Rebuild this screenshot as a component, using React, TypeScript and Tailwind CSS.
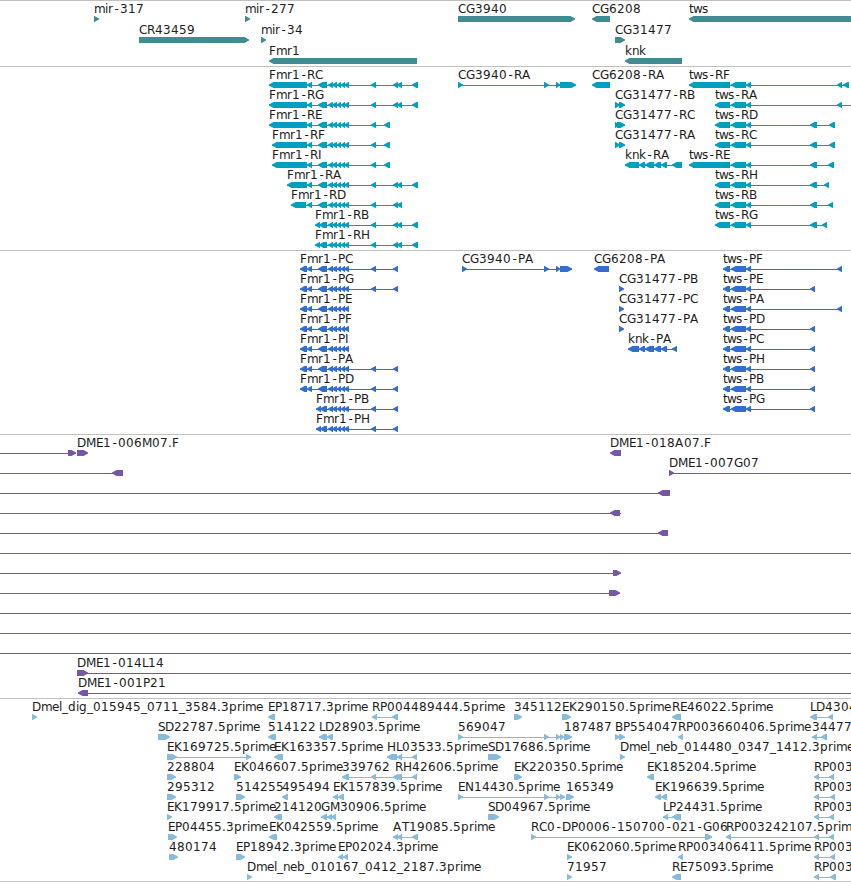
import React from 'react';

type Direction = 'left' | 'right';

type Feature = {
  label?: string;
  dir: Direction;
  exons: number[][];
  // extent of the connecting line when it goes past the exons
  line?: number[];
};

type TrackProps = {
  rows: Feature[][];
  color: string;
  className: string;
  rowClass: string;
};

const left = (label: string, exons: number[][], line?: number[]): Feature => ({ label, dir: 'left', exons, line });
const right = (label: string, exons: number[][], line?: number[]): Feature => ({ label, dir: 'right', exons, line });

// whole pixel advances of the 12px label font
const advances: Record<string, number> = {
  '-': 7, _: 6, '.': 4,
  A: 9, B: 8, C: 8, D: 9, E: 7, F: 7, G: 9, H: 9, I: 4, K: 8, L: 6, M: 10, N: 9, P: 7, R: 8, S: 7, T: 7,
  b: 8, d: 8, e: 7, g: 8, i: 3, k: 7, l: 3, m: 11, n: 7, p: 8, r: 5, s: 6, t: 4, w: 9,
};

const genes: Feature[][] = [
  [
    right('mir-317', [[94, 99]]),
    right('mir-277', [[245, 250]]),
    right('CG3940', [[458, 575]]),
    left('CG6208', [[592, 610]]),
    left('tws', [[689, 860]]),
  ],
  [right('CR43459', [[139, 249]]), right('mir-34', [[261, 266]]), right('CG31477', [[615, 625]])],
  [left('Fmr1', [[269, 417]]), left('knk', [[625, 682]])],
];

const fmrMiddle = [[307, 312], [318, 327], [328, 333], [332, 337], [337, 341], [341, 345], [344, 349], [371, 376]];
const fmrEnd = [[393, 398], [397, 402], [412, 418]];
const fmrCluster = [[328, 333], [332, 337], [337, 341], [341, 345], [344, 349]];
const twsStart = [[715, 730], [731, 746], [746, 751]];
const twsLong = [[689, 730], [731, 746], [746, 751]];

const transcripts: Feature[][] = [
  [
    left('Fmr1-RC', [[269, 307], ...fmrMiddle, ...fmrEnd]),
    right('CG3940-RA', [[458, 463], [544, 549], [556, 560], [560, 576]]),
    left('CG6208-RA', [[592, 610]]),
    left('tws-RF', [...twsLong, [837, 842], [843, 849]]),
  ],
  [
    left('Fmr1-RG', [[269, 307], ...fmrMiddle, ...fmrEnd]),
    right('CG31477-RB', [[615, 620], [619, 625]]),
    left('tws-RA', [...twsStart, [837, 842]], [715, 851]),
  ],
  [
    left('Fmr1-RE', [[269, 307], ...fmrMiddle, [384, 390]]),
    right('CG31477-RC', [[615, 619], [617, 625]]),
    left('tws-RD', [...twsStart, [810, 817], [829, 835]]),
  ],
  [
    left('Fmr1-RF', [[272, 307], ...fmrMiddle, [384, 390]]),
    right('CG31477-RA', [[615, 620], [619, 625]]),
    left('tws-RC', [...twsStart, [810, 817], [829, 835]]),
  ],
  [
    left('Fmr1-RI', [[272, 307], ...fmrMiddle, [384, 390]]),
    left('knk-RA', [[625, 639], [639, 645], [645, 654], [654, 661], [661, 667], [672, 682]]),
    left('tws-RE', [...twsLong, [810, 817], [828, 834]]),
  ],
  [left('Fmr1-RA', [[287, 307], ...fmrMiddle, ...fmrEnd]), left('tws-RH', [...twsStart, [810, 817], [824, 829]])],
  [
    left('Fmr1-RD', [[291, 306], ...fmrMiddle, [393, 398], [397, 402]]),
    left('tws-RB', [...twsStart, [810, 817], [828, 833]]),
  ],
  [
    left('Fmr1-RB', [[315, 320], [319, 327], ...fmrCluster, [371, 376], ...fmrEnd]),
    left('tws-RG', [...twsStart, [810, 817], [822, 827]]),
  ],
  [left('Fmr1-RH', [[315, 320], [319, 327], ...fmrCluster, [371, 376], ...fmrEnd])],
];

const fmrCoding = [[300, 307], [307, 312], [318, 327], ...fmrCluster];
const fmrCodingShort = [[316, 321], [320, 327], ...fmrCluster];
const fmrCodingEnd = [[371, 376], [393, 398]];
const twsCoding = [[723, 730], [731, 746], [746, 751]];

const proteins: Feature[][] = [
  [
    left('Fmr1-PC', [...fmrCoding, ...fmrCodingEnd]),
    right('CG3940-PA', [[462, 467], [544, 549], [556, 560], [560, 572]]),
    left('CG6208-PA', [[594, 609]]),
    left('tws-PF', [...twsCoding, [837, 842]]),
  ],
  [
    left('Fmr1-PG', [...fmrCoding, ...fmrCodingEnd]),
    right('CG31477-PB', [[619, 624]]),
    left('tws-PE', [...twsCoding, [810, 815]]),
  ],
  [left('Fmr1-PE', fmrCoding), right('CG31477-PC', [[619, 624]]), left('tws-PA', [...twsCoding, [837, 842]])],
  [left('Fmr1-PF', fmrCoding), right('CG31477-PA', [[619, 624]]), left('tws-PD', [...twsCoding, [810, 815]])],
  [
    left('Fmr1-PI', fmrCoding),
    left('knk-PA', [[628, 639], [639, 645], [645, 654], [654, 661], [661, 667], [672, 677]]),
    left('tws-PC', [...twsCoding, [810, 815]]),
  ],
  [left('Fmr1-PA', [...fmrCoding, ...fmrCodingEnd]), left('tws-PH', [...twsCoding, [810, 815]])],
  [left('Fmr1-PD', [...fmrCoding, ...fmrCodingEnd]), left('tws-PB', [...twsCoding, [810, 815]])],
  [left('Fmr1-PB', [...fmrCodingShort, ...fmrCodingEnd]), left('tws-PG', [...twsCoding, [810, 815]])],
  [left('Fmr1-PH', [...fmrCodingShort, ...fmrCodingEnd])],
];

const fullLine: Feature = { dir: 'left', exons: [], line: [0, 851] };

const clones: Feature[][] = [
  [right('', [[68, 76]], [0, 76]), right('DME1-006M07.F', [[77, 88]]), left('DME1-018A07.F', [[610, 621]])],
  [left('', [[112, 123]], [0, 123]), right('DME1-007G07', [[669, 674]], [669, 851])],
  [left('', [[658, 670]], [0, 670])],
  [left('', [[610, 620]], [0, 621])],
  [left('', [[658, 668]], [0, 668])],
  [fullLine],
  [right('', [[613, 621]], [0, 621])],
  [right('', [[609, 620]], [0, 620])],
  [fullLine],
  [fullLine],
  [fullLine],
  [right('DME1-014L14', [[77, 88]], [77, 851])],
  [left('DME1-001P21', [[78, 88]], [78, 851])],
];

const ests: Feature[][] = [
  [
    right('Dmel_dig_015945_0711_3584.3prime', [[32, 37]]),
    left('EP18717.3prime', [[268, 275]]),
    left('RP004489444.5prime', [[372, 377], [392, 398]]),
    right('345112', [[514, 522]]),
    right('EK290150.5prime', [[562, 571]]),
    left('RE46022.5prime', [[672, 681]]),
    left('LD4304', [[810, 817], [828, 833]]),
  ],
  [
    right('SD22787.5prime', [[158, 170]]),
    left('514122', [[268, 276]]),
    left('LD28903.5prime', [[319, 327], [327, 333]]),
    right('569047', [[458, 463], [544, 549], [556, 560], [560, 564]]),
    right('187487', [[564, 572]]),
    right('BP554047', [[615, 620], [619, 625]]),
    left('RP003660406.5prime', [[678, 683]]),
    left('34477', [[812, 817], [821, 827]]),
  ],
  [
    right('EK169725.5prime', [[167, 177], [246, 251]]),
    left('EK163357.5prime', [[274, 283]]),
    left('HL03533.5prime', [[387, 397], [397, 402], [412, 417]]),
    right('SD17686.5prime', [[488, 501]]),
    right('Dmel_neb_014480_0347_1412.3prime', [[620, 625]]),
  ],
  [
    right('228804', [[167, 176]]),
    right('EK046607.5prime', [[234, 241]]),
    left('339762', [[342, 349], [371, 376], [393, 398]]),
    left('RH42606.5prime', [[395, 402], [412, 417]]),
    right('EK220350.5prime', [[514, 522]]),
    left('EK185204.5prime', [[647, 654]]),
    left('RP003', [[814, 819], [829, 834]]),
  ],
  [
    right('295312', [[167, 176]]),
    right('514255', [[236, 245]]),
    left('495494', [[282, 288]]),
    left('EK157839.5prime', [[333, 338], [338, 344]]),
    right('EN14430.5prime', [[458, 463], [544, 549], [556, 560], [560, 565]]),
    right('165349', [[566, 574]]),
    left('EK196639.5prime', [[655, 661], [661, 667]]),
    left('RP003', [[814, 819], [830, 835]]),
  ],
  [
    right('EK179917.5prime', [[167, 172]]),
    left('214120', [[274, 282]]),
    left('GM30906.5prime', [[321, 327], [327, 332], [331, 336]]),
    right('SD04967.5prime', [[488, 499]]),
    left('LP24431.5prime', [[663, 668], [672, 681]]),
    left('RP003', [[814, 819], [829, 834]]),
  ],
  [
    right('EP04455.3prime', [[168, 177]]),
    left('EK042559.5prime', [[269, 277]]),
    left('AT19085.5prime', [[393, 398], [397, 402], [412, 418]]),
    right('RC0-DP0006-150700-021-G06', [[531, 536], [705, 712]]),
    left('RP003242107.5prime', [[726, 731], [814, 819], [829, 834]]),
  ],
  [
    right('480174', [[169, 178]]),
    right('EP18942.3prime', [[236, 245]]),
    left('EP02024.3prime', [[338, 343], [343, 348]]),
    right('EK062060.5prime', [[567, 572]]),
    left('RP003406411.5prime', [[678, 683]]),
    left('RP003', [[814, 819], [830, 835]]),
  ],
  [
    right('Dmel_neb_010167_0412_2187.3prime', [[247, 252]]),
    right('71957', [[567, 572]]),
    left('RE75093.5prime', [[672, 681]]),
    left('RP003', [[814, 819], [830, 836]]),
  ],
];

const glyphPositions = (label: string, start: number) => {
  let x = start;
  return label
    .split('')
    .map(char => {
      // the hyphen is narrower than its cell, so centre it
      const current = char === '-' ? x + 1.5 : x;
      x += advances[char] ?? 8;
      return current;
    })
    .join(' ');
};

const arrowPoints = (a: number, b: number, dir: Direction) => {
  const head = Math.min(5, b - a);
  return dir === 'left'
    ? `${a},18.6 ${a},17.4 ${a + head - 0.5},15 ${b},15 ${b},21 ${a + head - 0.5},21`
    : `${b},18.6 ${b},17.4 ${b - head + 0.5},15 ${a},15 ${a},21 ${b - head + 0.5},21`;
};

const FeatureGlyph: React.FC<{ feature: Feature }> = ({ feature }) => {
  const { label, dir, exons, line } = feature;
  const [from, to] = line ?? [exons[0][0], exons[exons.length - 1][1]];

  return (
    <g>
      {(line || exons.length > 1) && <rect x={from} y={18} width={to - from} height={1} />}
      {exons.map(([a, b]) => (
        <polygon key={a} points={arrowPoints(a, b, dir)} />
      ))}
      {label && (
        <text className="fill-[#1c1c1c]" x={glyphPositions(label, exons[0][0])} y={12}>
          {label}
        </text>
      )}
    </g>
  );
};

const Track: React.FC<TrackProps> = ({ rows, color, className, rowClass }) => (
  <section className={`border-t border-[#c0c0c0] ${className}`}>
    {rows.map((row, index) => (
      <svg key={index} className={`block w-full overflow-visible fill-current ${rowClass} ${color}`}>
        {row.map((feature, i) => (
          <FeatureGlyph key={i} feature={feature} />
        ))}
      </svg>
    ))}
  </section>
);

const App: React.FC = () => {
  return (
    <main className="flex h-[882px] w-[851px] flex-col overflow-hidden border-b border-[#c0c0c0] bg-white font-['DejaVu_Sans',sans-serif] text-[12px]">
      <Track rows={genes} color="text-[#408c92]" className="h-[66px]" rowClass="h-[21px]" />
      <Track rows={transcripts} color="text-[#009fbf]" className="h-[184px]" rowClass="h-5" />
      <Track rows={proteins} color="text-[#306ecf]" className="h-[184px]" rowClass="h-5" />
      <Track rows={clones} color="text-[#7458a6]" className="h-[264px]" rowClass="h-5" />
      <Track rows={ests} color="text-[#86bbdc]" className="h-[183px]" rowClass="h-5" />
    </main>
  );
};

export default App;
